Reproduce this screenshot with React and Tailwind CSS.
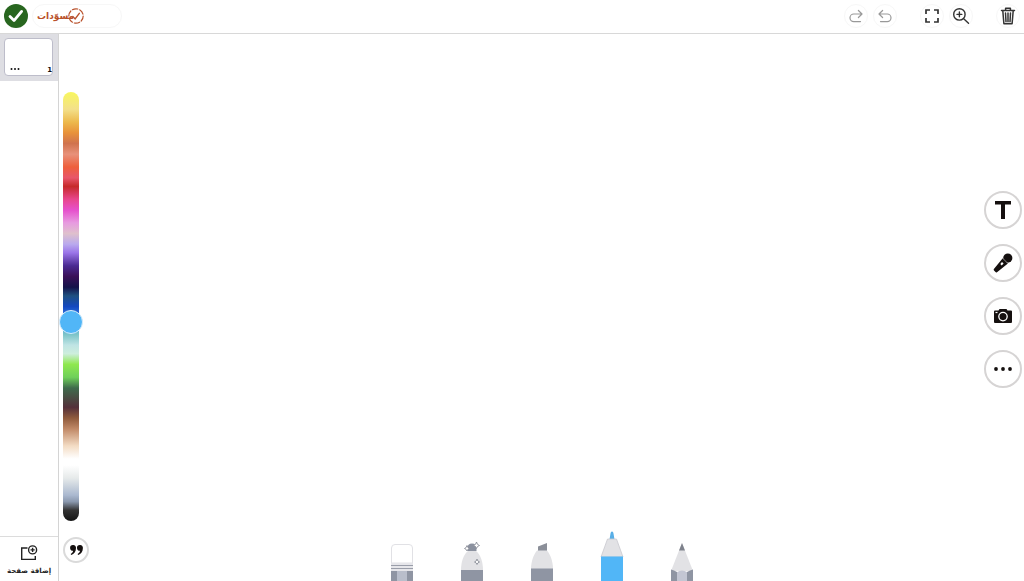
import { useState } from "react";

const RAIL =
  "bg-[linear-gradient(to_bottom,#f8f75e_0%,#f3e08a_4%,#edb94c_7%,#e8923a_9.5%,#d0734e_12%,#e8917a_14.5%,#ee5f3c_17.5%,#e8566a_20%,#c62a2a_22%,#e8468c_25%,#e650cc_27.5%,#e79be0_30.5%,#dfc0cc_33%,#b9a9ee_35.5%,#9a74e8_37.5%,#4a2a92_40.5%,#3a1058_43%,#14124a_45.5%,#1e5080_47.5%,#1448c0_50%,#3b8cf0_53%,#7cc4c8_56.5%,#bfe4e4_59%,#cdeedd_61%,#8fe84e_63.5%,#6fd05a_66.5%,#3f6a4c_69%,#54303a_73.5%,#8f5a3c_76%,#c08866_78.5%,#f3dcc4_82.5%,#ffffff_85.5%,#ffffff_87%,#e6eaea_90%,#aab8cf_94%,#8a98ae_95.5%,#333333_97.5%,#141414_100%)]";

function RoundTool({ label, children }) {
  return (
    <button
      type="button"
      aria-label={label}
      className="flex size-[38px] items-center justify-center rounded-full border-2 border-[#d6d4d4] bg-white text-[#15100f]"
    >
      {children}
    </button>
  );
}

function HeaderButton({ label, children, className }) {
  return (
    <button
      type="button"
      aria-label={label}
      className={`flex size-6 items-center justify-center rounded-full border border-[#f7f7f7] ${className}`}
    >
      {children}
    </button>
  );
}

function TopBar() {
  return (
    <header className="flex h-[34px] shrink-0 items-center border-b border-[#d8d8d8] px-1 pb-0.5">
      <button type="button" aria-label="تم" className="size-6 rounded-full bg-[#28661f]">
        <svg viewBox="0 0 24 24" className="size-6" fill="none" stroke="#fff" strokeWidth="2.8" strokeLinecap="round" strokeLinejoin="round">
          <path d="M6 12.6l4 4L17.6 7.4" />
        </svg>
      </button>
      <button
        type="button"
        className="ml-1 flex h-6 w-[90px] items-center rounded-full border border-[#f7f7f7] pl-1 text-[#b9512b]"
      >
        <span dir="rtl" className="text-[9px] leading-4 font-bold">مسوّدات</span>
        <svg viewBox="0 0 16 16" className="-ml-1.5 size-4 shrink-0" fill="none" stroke="currentColor" strokeWidth="1.2" strokeLinecap="round">
          <circle cx="8" cy="8" r="7.2" strokeDasharray="5.5 2" />
          <path d="M4.8 8.4l2.3 2.5 4.2-5.6" strokeWidth="1.4" />
        </svg>
      </button>
      <div className="ml-auto flex items-center">
        <HeaderButton label="إعادة" className="mr-[5px] text-[#999]">
          <svg viewBox="0 0 16 16" className="size-4 shrink-0" fill="none" stroke="currentColor" strokeWidth="1.2" strokeLinecap="round" strokeLinejoin="round">
            <path d="M10.400 2.500l3.600 3.500-3.600 3.500M14 6H5.800a3.800 3.800 0 0 0 0 7.600h6.700" />
          </svg>
        </HeaderButton>
        <HeaderButton label="تراجع" className="mr-[23px] text-[#999]">
          <svg viewBox="0 0 16 16" className="size-4 shrink-0" fill="none" stroke="currentColor" strokeWidth="1.2" strokeLinecap="round" strokeLinejoin="round">
            <path d="M5.600 2.500L2 6l3.600 3.500M2 6h8.200a3.800 3.800 0 0 1 0 7.600H3.500" />
          </svg>
        </HeaderButton>
        <HeaderButton label="ملء الشاشة" className="mr-[5px] text-[#333]">
          <svg viewBox="0 0 16 16" className="size-4 shrink-0" fill="none" stroke="currentColor" strokeWidth="1.7">
            <path d="M2 6V2h4M10 2h4v4M14 10v4h-4M6 14H2v-4" />
          </svg>
        </HeaderButton>
        <HeaderButton label="تكبير" className="mr-[23px] text-[#333]">
          <svg viewBox="0 0 18 18" className="size-[18px] shrink-0" fill="none" stroke="currentColor" strokeWidth="1.4" strokeLinecap="round">
            <circle cx="7.4" cy="7.4" r="5.7" />
            <path d="M11.7 11.7l4.8 4.6M7.4 5v4.8M5 7.4h4.8" />
          </svg>
        </HeaderButton>
        <HeaderButton label="حذف" className="text-[#333]">
          <svg viewBox="0 0 16 18" className="h-[18px] w-4 shrink-0" fill="none" stroke="currentColor" strokeWidth="1.5" strokeLinecap="round" strokeLinejoin="round">
            <path d="M1.500 3.600h13M5.600 3.200V1.200h4.800v2M2.800 3.800l1.100 13h8.200l1.100-13" />
            <path d="M5.500 6l.5 8.800M8 6v8.800M10.500 6l-.5 8.800" strokeWidth="1.500" />
          </svg>
        </HeaderButton>
      </div>
    </header>
  );
}

function Pages() {
  return (
    <aside className="flex w-[59px] shrink-0 flex-col border-r border-[#d4d4d4]">
      <div className="bg-[#dedee3] px-1 pt-1 pb-[5px]">
        <div className="flex h-[38px] w-[49px] items-end justify-between rounded-sm border border-[#bdbdca] bg-white pl-[5px] text-[#111]">
          <button type="button" aria-label="خيارات الصفحة" className="flex h-3 items-center">
            <svg viewBox="0 0 10 2" className="h-0.5 w-2.5" fill="currentColor">
              <circle cx="1.5" cy="1" r="1" />
              <circle cx="5" cy="1" r="1" />
              <circle cx="8.5" cy="1" r="1" />
            </svg>
          </button>
          <span className="text-[7px] leading-[9px] font-bold">1</span>
        </div>
      </div>
      <button
        type="button"
        className="mt-auto flex h-[45px] flex-col items-center border-t border-[#dcdcdc] pt-2 text-[#222]"
      >
        <svg viewBox="0 0 18 16" className="h-4 w-[18px]" fill="none" stroke="currentColor" strokeWidth="1.4">
          <path d="M7.500 3H1.700v11.400h13.600V11" />
          <circle cx="12.600" cy="4.900" r="4" />
          <path d="M12.600 2.800v4.200M10.500 4.900h4.200" />
        </svg>
        <span dir="rtl" className="mt-1 text-[7px] leading-3 font-bold whitespace-nowrap">إضافة صفحة</span>
      </button>
    </aside>
  );
}

function ColourRail() {
  const [hue, setHue] = useState(538);
  return (
    <div className="flex flex-col items-start pt-[58px] pb-[18px] pl-1">
      <input
        type="range"
        aria-label="اللون"
        min="0"
        max="1000"
        value={hue}
        onChange={(e) => setHue(Number(e.target.value))}
        className={`min-h-0 w-4 flex-1 appearance-none rounded-full [direction:ltr] [writing-mode:vertical-lr] [&::-webkit-slider-thumb]:size-6 [&::-webkit-slider-thumb]:appearance-none [&::-webkit-slider-thumb]:rounded-full [&::-webkit-slider-thumb]:border [&::-webkit-slider-thumb]:border-[#d8ecfa] [&::-webkit-slider-thumb]:bg-[#51b6f7] ${RAIL}`}
      />
      <button
        type="button"
        aria-label="اقتباس"
        className="mt-4 flex size-[26px] items-center justify-center rounded-full border-2 border-[#dadada] bg-white text-[#15100f]"
      >
        <svg viewBox="0 0 13 10" className="h-2.5 w-[13px] shrink-0" fill="currentColor">
          <path d="M2.900 0a2.900 2.900 0 0 1 3.100 3.100C6 6.700 4.200 9 1.200 10L.7 9C2.200 8.100 3 7 3.100 5.800A2.900 2.900 0 0 1 2.900 0z" />
          <path d="M9.800 0a2.900 2.900 0 0 1 3.100 3.100C12.900 6.700 11.100 9 8.100 10L7.600 9C9.100 8.100 9.900 7 10 5.800A2.900 2.900 0 0 1 9.800 0z" />
        </svg>
      </button>
    </div>
  );
}

function Eraser() {
  return (
    <svg viewBox="0 0 24 52" className="h-[52px] w-6">
      <path d="M1.500 34V19q0-3.500 3.500-3.500h14q3.500 0 3.500 3.500v15z" fill="#fff" stroke="#e1e1e5" />
      <path d="M1 34h22v8H1z" fill="#e6e6ea" />
      <path d="M1 36.500h22M1 39.500h22" stroke="#9a9eaa" strokeWidth="1.200" />
      <path d="M1 42h22v10H1z" fill="#8f95a3" />
      <path d="M7 42h10v10H7z" fill="#b9becb" />
    </svg>
  );
}

function GlitterPen() {
  return (
    <svg viewBox="0 0 24 52" className="h-[52px] w-6">
      <path d="M1 41C1 32 4 25 8 22h8c4 3 7 10 7 19z" fill="#e2e2e5" />
      <path d="M7.500 22v-3q0-4.500 4.500-4.500t4.500 4.500v3z" fill="#8b919f" />
      <path d="M1 41h22v11H1z" fill="#8f95a3" />
      <g fill="#fff" stroke="#8b8f99" strokeWidth=".9">
        <path d="M16.500 13q.5 3 3 3.500-2.500.5-3 3-.5-2.500-3-3 2.500-.5 3-3.500z" />
        <path d="M7 16.500q.5 2.500 2.500 3-2 .5-2.500 2.500Q6.500 20 4.500 19.500q2-.5 2.500-3z" />
        <path d="M17 30q.5 2.500 2.500 3-2 .5-2.500 2.500-.5-2-2.500-2.500 2-.5 2.500-3z" />
      </g>
    </svg>
  );
}

function Marker() {
  return (
    <svg viewBox="0 0 24 52" className="h-[52px] w-6">
      <path d="M8 17.500l9-3.500v8H8z" fill="#8b8f99" />
      <path d="M1 40C1 32 4 25 7 21.500h10c3 3.500 6 10.500 6 18.500z" fill="#e2e2e5" />
      <path d="M1 39.500h22V52H1z" fill="#8f95a3" />
    </svg>
  );
}

function FeltPen() {
  return (
    <svg viewBox="0 0 24 52" className="h-[52px] w-6">
      <path d="M9.500 10.500l1-6q.2-2 1.500-2t1.500 2l1 6z" fill="#58aee6" />
      <path d="M1 28L7.500 10h9L23 28z" fill="#e2e2e5" stroke="#c9c9cf" strokeWidth=".8" />
      <path d="M1 27.500h22V52H1z" fill="#51b6f7" />
    </svg>
  );
}

function Pencil() {
  return (
    <svg viewBox="0 0 24 52" className="h-[52px] w-6">
      <path d="M12 14L1 42h22z" fill="#e2e2e5" />
      <path d="M12 14L9 21.500h6z" fill="#7e828c" />
      <path d="M1 52V40.500q3 .5 6 2.500v9z" fill="#8f95a3" />
      <path d="M17 52v-9q3-2 6-2.500V52z" fill="#8f95a3" />
      <path d="M7 52v-9q5-3 10 0v9z" fill="#c3c6d3" />
    </svg>
  );
}

const PENS = [
  ["ممحاة", Eraser],
  ["قلم لامع", GlitterPen],
  ["قلم تمييز", Marker],
  ["قلم حبر", FeltPen],
  ["قلم رصاص", Pencil],
];

function Tray() {
  return (
    <div className="flex items-end justify-center gap-[46px] self-end">
      {PENS.map(([label, Pen]) => (
        <button key={label} type="button" aria-label={label} className="block">
          <Pen />
        </button>
      ))}
    </div>
  );
}

function InsertTools() {
  return (
    <div className="flex flex-col justify-center gap-[15px] pb-9">
      <RoundTool label="نص">
        <svg viewBox="0 0 18 20" className="h-5 w-[18px]" fill="currentColor">
          <path d="M1 1h16v3.600h-6V19H7V4.600H1z" />
        </svg>
      </RoundTool>
      <RoundTool label="تسجيل صوتي">
        <svg viewBox="0 0 20 20" className="size-5 shrink-0" fill="currentColor">
          <circle cx="14.800" cy="5.100" r="4.600" />
          <path d="M9.700 5.200l5.200 5.400L4 19.200q-.8.600-1.500-.1L1 17.600q-.7-.7-.1-1.500z" />
          <path d="M9.800 5.300l4.900 5" stroke="#fff" strokeWidth=".5" />
          <path d="M9 9l1.600 1.600-1.900 1.900-1.400-1.500z" fill="#fff" />
        </svg>
      </RoundTool>
      <RoundTool label="كاميرا">
        <svg viewBox="0 0 20 16" className="h-4 w-5">
          <path d="M1 3.500q0-1 1-1h3.500l1-1.500h7l1 1.500H18q1 0 1 1V14q0 1-1 1H2q-1 0-1-1z" fill="currentColor" />
          <circle cx="10" cy="8.600" r="4.200" fill="none" stroke="#fff" strokeWidth="1.300" />
          <path d="M2.500 4.500h2" stroke="#fff" strokeWidth="1.200" />
        </svg>
      </RoundTool>
      <RoundTool label="المزيد">
        <svg viewBox="0 0 20 4" className="h-1 w-5" fill="currentColor">
          <circle cx="3" cy="2" r="1.900" />
          <circle cx="10" cy="2" r="1.900" />
          <circle cx="17" cy="2" r="1.900" />
        </svg>
      </RoundTool>
    </div>
  );
}

export default function App() {
  return (
    <div className="flex h-screen flex-col overflow-hidden bg-white font-['DejaVu_Sans',sans-serif]">
      <TopBar />
      <div className="flex min-h-0 flex-1">
        <Pages />
        <main className="grid min-w-0 flex-1 grid-cols-[40px_1fr_40px] grid-rows-[minmax(0,1fr)]">
          <ColourRail />
          <Tray />
          <InsertTools />
        </main>
      </div>
    </div>
  );
}
